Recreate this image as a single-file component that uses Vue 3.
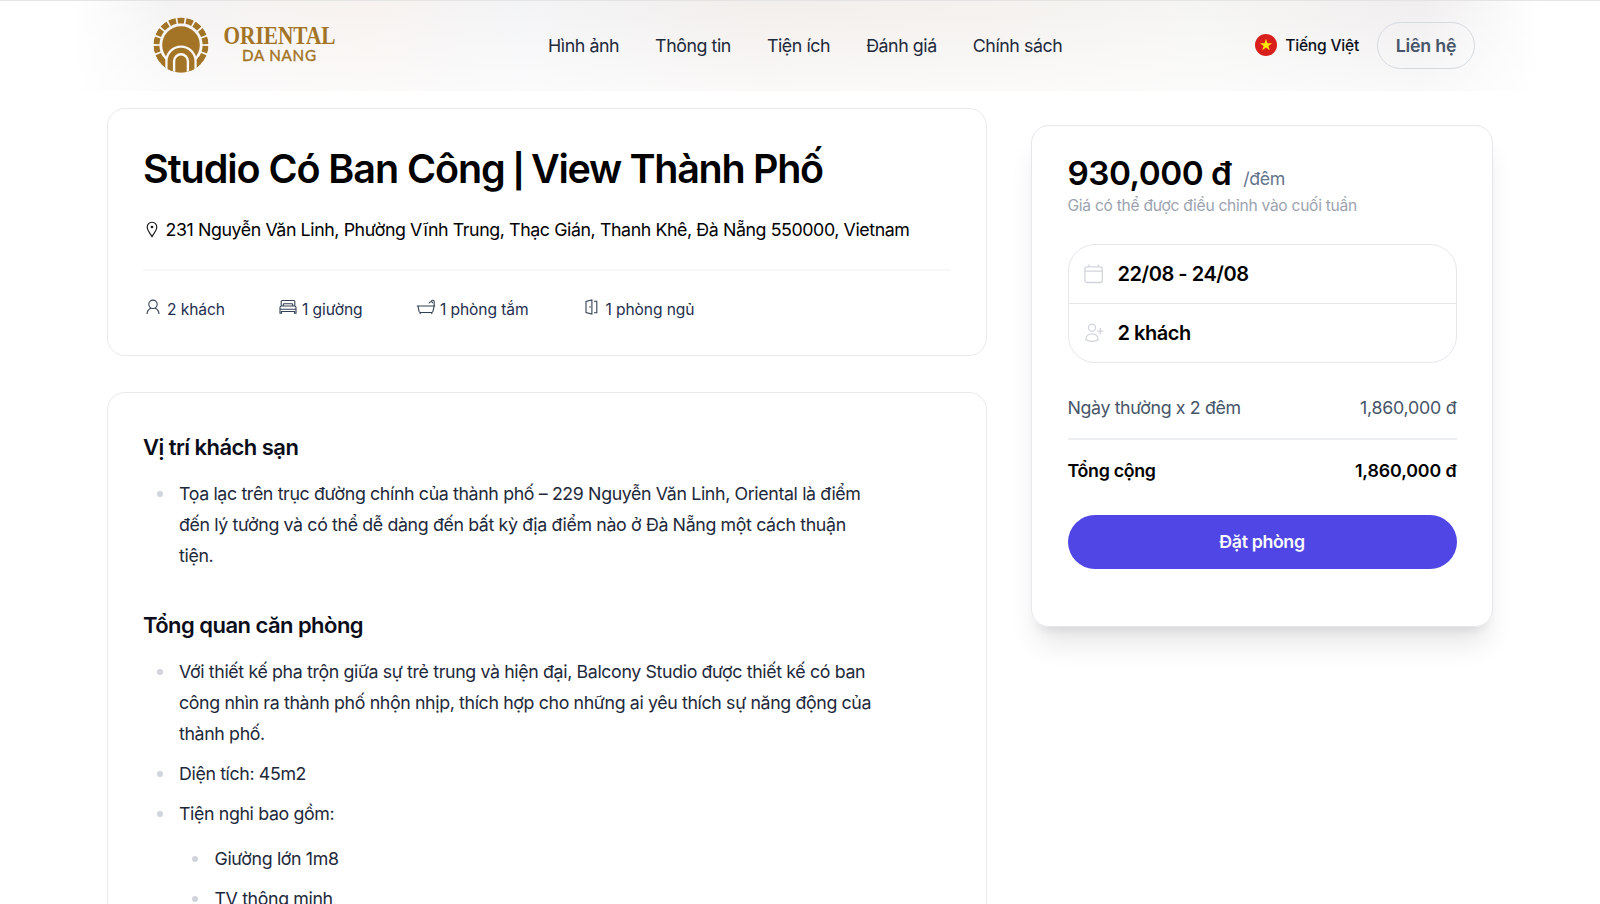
<template>
  <div class="page">
    <header class="header">
      <div class="header-inner">
        <a class="logo" href="#">
          <svg width="190" height="58" viewBox="0 0 190 58">
            <defs>
              <clipPath id="logo-clip">
                <circle cx="29" cy="29" r="27.6" />
              </clipPath>
            </defs>
            <g clip-path="url(#logo-clip)">
              <circle
                class="ring"
                cx="29"
                cy="29"
                r="24.6"
                pathLength="180"
                stroke-dasharray="8 2"
                stroke-dashoffset="-1"
              />
              <path class="ring" d="M8.4 42.2A24.4 24.4 0 0 0 49.6 42.2" />
              <circle class="gold" cx="29" cy="29" r="18.8" />
              <path class="gap" d="M13.3 58V45.2a15.7 15.7 0 0 1 31.4 0V58z" />
              <path class="gold" d="M15.6 58V45.2a13.4 13.4 0 0 1 26.8 0V58z" />
              <path class="gap" d="M20.9 58V45.2a8.1 8.1 0 0 1 16.2 0V58z" />
              <path class="gold" d="M23.3 58V45.2a5.7 5.7 0 0 1 11.4 0V58z" />
            </g>
            <text class="brand" x="71.5" y="27.5" textLength="112" lengthAdjust="spacingAndGlyphs">ORIENTAL</text>
            <text class="city" x="90" y="44.7" textLength="74">DA NANG</text>
          </svg>
        </a>

        <nav class="nav">
          <a v-for="item in navItems" :key="item" href="#">{{ item }}</a>
        </nav>

        <div class="header-right">
          <div class="lang">
            <svg width="22" height="22" viewBox="0 0 22 22">
              <circle cx="11" cy="11" r="11" fill="#d91f1b" />
              <path
                d="M11 4.8l1.45 4.4h4.65l-3.75 2.75 1.45 4.4L11 13.6l-3.8 2.75 1.45-4.4L4.9 9.2h4.65z"
                fill="#ffec00"
              />
            </svg>
            <span>Tiếng Việt</span>
          </div>
          <button class="contact-btn">Liên hệ</button>
        </div>
      </div>
    </header>

    <main class="main">
      <div class="content">
        <section class="card summary">
          <h1><span class="room-type">Studio Có Ban Công</span> <span class="bar">|</span> View Thành Phố</h1>
          <div class="address">
            <svg width="12" height="17" viewBox="0 0 12 17">
              <path d="M6 15.6C4.2 12.6 1.2 9.2 1.2 6a4.8 4.8 0 0 1 9.6 0c0 3.2-3 6.6-4.8 9.6z" />
              <circle cx="6" cy="6" r="0.8" />
            </svg>
            <span>231 Nguyễn Văn Linh, Phường Vĩnh Trung, Thạc Gián, Thanh Khê, Đà Nẵng 550000, Vietnam</span>
          </div>
          <hr />
          <ul class="stats">
            <li class="stat-guest">
              <svg width="14" height="16" viewBox="0 0 14 16">
                <circle cx="7" cy="5.3" r="4.2" />
                <path d="M1 15c.2-3 2.2-5 4-5.7M13 15c-.2-3-2.2-5-4-5.7" />
              </svg>
              <span>2 khách</span>
            </li>
            <li class="stat-bed">
              <svg width="18" height="16" viewBox="0 0 18 16">
                <path d="M2.2 7V2.5q0-1 1-1h11.600q1 0 1 1V7M1 14.200V8.500Q1 7 2.500 7h13Q17 7 17 8.500v5.700h-1.500v-1.700h-13v1.700zM1 10.300h16M4.300 7V5.500q0-.8.8-.8h7.800q.8 0 .8.800V7" />
              </svg>
              <span>1 giường</span>
            </li>
            <li class="stat-bath">
              <svg width="20" height="16" viewBox="0 0 20 16">
                <path d="M.8 7h18.400M2 7l1 5.200q.3 1.300 1.500 1.300h11q1.200 0 1.500-1.300L18.200 7V2.800q0-1.600-1.500-1.600-1.300 0-1.500 1.500M13 4.300q.3-1.600 2.200-1.600 1.500 0 1.500 1.600M4.500 13.500l-.5 1.500M15.500 13.500l.5 1.500" />
              </svg>
              <span>1 phòng tắm</span>
            </li>
            <li class="stat-room">
              <svg width="13" height="16" viewBox="0 0 13 16">
                <path d="M6.900 1v14L1 13.600V2.400zM9 2.200h2.800v11.600H9M5 7.300v1.400" />
              </svg>
              <span>1 phòng ngủ</span>
            </li>
          </ul>
        </section>

        <section class="card prose">
          <h2>Vị trí khách sạn</h2>
          <ul>
            <li>
              Tọa lạc trên trục đường chính của thành phố – 229 Nguyễn Văn Linh, Oriental là điểm
              đến lý tưởng và có thể dễ dàng đến bất kỳ địa điểm nào ở Đà Nẵng một cách thuận tiện.
            </li>
          </ul>
          <h2>Tổng quan căn phòng</h2>
          <ul>
            <li>
              Với thiết kế pha trộn giữa sự trẻ trung và hiện đại, Balcony Studio được thiết kế có ban
              công nhìn ra thành phố nhộn nhịp, thích hợp cho những ai yêu thích sự năng động của
              thành phố.
            </li>
            <li>Diện tích: 45m2</li>
            <li>
              Tiện nghi bao gồm:
              <ul>
                <li v-for="item in amenities" :key="item">{{ item }}</li>
              </ul>
            </li>
          </ul>
        </section>
      </div>

      <aside class="booking">
        <div class="price">
          <strong>930,000 đ</strong>
          <span>/đêm</span>
        </div>
        <p class="note">Giá có thể được điều chỉnh vào cuối tuần</p>

        <div class="picker">
          <div class="picker-row">
            <svg width="20" height="20" viewBox="0 0 20 20">
              <rect x="0.9" y="2.8" width="17.4" height="15.7" rx="2" />
              <path d="M.9 7.2h17.400M4.900 2.800V.6M14.300 2.800V.6" />
            </svg>
            <span>22/08 - 24/08</span>
          </div>
          <div class="picker-row">
            <svg width="20" height="20" viewBox="0 0 20 20">
              <circle cx="8" cy="4.7" r="3.5" />
              <path d="M1.8 16.800c0-3.400 2.500-5.900 6.200-5.900s6.200 2.500 6.200 5.900c-2.800 2-9.600 2-12.400 0zM16.300 5v6.400M13.100 8.200h6.200" />
            </svg>
            <span>2 khách</span>
          </div>
        </div>

        <div class="line">
          <span class="line-label">Ngày thường x 2 đêm</span>
          <span class="line-value">1,860,000 đ</span>
        </div>
        <hr />
        <div class="line total">
          <span class="line-label">Tổng cộng</span>
          <span class="line-value">1,860,000 đ</span>
        </div>

        <button class="book-btn">Đặt phòng</button>
      </aside>
    </main>
  </div>
</template>

<script setup>
import { ref } from 'vue'

const navItems = ref(['Hình ảnh', 'Thông tin', 'Tiện ích', 'Đánh giá', 'Chính sách'])

const amenities = ref(['Giường lớn 1m8', 'TV thông minh'])
</script>

<style>
body {
  margin: 0;
  overflow: hidden;
  background: #fff;
}
</style>

<style scoped>
.page {
  height: 904px;
  overflow: hidden;
  font-family: Inter, 'Noto Sans', sans-serif;
  font-size: 17.8px;
  letter-spacing: -0.37px;
  color: #000;
}

a {
  color: inherit;
  text-decoration: none;
}

ul {
  margin: 0;
  padding: 0;
  list-style: none;
}

button {
  font: inherit;
  letter-spacing: inherit;
  cursor: pointer;
}

/* header */
.header {
  box-sizing: border-box;
  height: 91px;
  border-top: 1px solid #e4e4e4;
  background:
    linear-gradient(to bottom, rgba(255, 255, 255, 0), rgba(255, 255, 255, 0.65)),
    linear-gradient(
      to right,
      #fff 70px,
      #f4f3f3 170px,
      #f7f2ef 370px,
      #f3f4f6 520px,
      #f2eeeb 760px,
      #f4f1ee 1000px,
      #f5f5f3 1200px,
      #f0eeee 1420px,
      #fff 1540px
    );
}

.header-inner {
  display: grid;
  grid-template-columns: 396px 1fr auto;
  align-items: center;
  height: 88px;
  padding: 0 125px 0 152px;
}

.logo {
  height: 58px;
  margin-top: -1px;
}

.logo svg {
  display: block;
}

.ring {
  fill: none;
  stroke: #a37425;
  stroke-width: 6;
}

.gold {
  fill: #a37425;
}

.gap {
  fill: #f8f7f6;
}

.brand {
  font-family: 'Liberation Serif', serif;
  font-size: 25px;
  font-weight: 700;
  letter-spacing: 0;
  fill: #a37425;
}

.city {
  font-family: Lato, sans-serif;
  font-size: 15.2px;
  font-weight: 400;
  letter-spacing: 0;
  fill: #a37425;
  stroke: #a37425;
  stroke-width: 0.4;
}

.nav {
  display: flex;
  gap: 36px;
  letter-spacing: -0.43px;
  color: #1e293b;
}

.header-right {
  display: flex;
  align-items: center;
  gap: 18px;
}

.lang {
  display: flex;
  align-items: center;
  gap: 8.5px;
  font-size: 15.6px;
  font-weight: 500;
  color: #0b1020;
  letter-spacing: -0.22px;
}

.contact-btn {
  box-sizing: border-box;
  width: 98px;
  height: 47px;
  padding: 0;
  border: 1px solid #d5dae1;
  border-radius: 24px;
  background: transparent;
  color: #475569;
  font-weight: 600;
  letter-spacing: -0.22px;
}

/* layout */
.main {
  display: flex;
  align-items: flex-start;
  gap: 44px;
  padding: 17px 107px 0;
}

.content {
  display: flex;
  flex-direction: column;
  gap: 36px;
  width: 880px;
}

.card {
  box-sizing: border-box;
  border: 1px solid #e8eaed;
  border-radius: 18px;
  padding: 36px 35px;
}

hr {
  margin: 0;
  border: 0;
}

/* summary */
.summary {
  height: 248px;
}

.summary h1 {
  height: 47px;
  margin: 0;
  font-size: 39.5px;
  font-weight: 600;
  line-height: 48px;
  letter-spacing: -1.29px;
  white-space: nowrap;
}

.room-type {
  letter-spacing: -1.06px;
}

.bar {
  margin: 0 -1px;
  font-size: 33px;
  font-weight: 700;
  line-height: 1;
}

.address {
  display: flex;
  align-items: center;
  gap: 8px;
  height: 28px;
  margin-top: 23.5px;
  padding-left: 2.5px;
  letter-spacing: -0.41px;
}

.address svg {
  fill: none;
  stroke: #111;
  stroke-width: 1.1;
}

.summary hr {
  height: 2px;
  margin-top: 25px;
  background: #f8f8fa;
}

.stats {
  display: flex;
  align-items: center;
  height: 26px;
  margin-top: 25.5px;
  padding-left: 3px;
  font-size: 15.6px;
  letter-spacing: -0.1px;
  color: #1e2f4d;
}

.stats li {
  display: flex;
  align-items: center;
}

.stats svg {
  margin-top: -5px;
  fill: none;
  stroke: #334155;
  stroke-width: 1.1;
}

.stat-guest {
  gap: 7px;
  width: 133px;
}

.stat-bed {
  gap: 5px;
  width: 137px;
}

.stat-bath {
  gap: 4px;
  width: 168.5px;
}

.stat-room {
  gap: 8px;
}

/* description */
.prose {
  height: 560px;
  color: #1e293b;
}

.prose h2 {
  margin: 0;
  font-size: 22px;
  font-weight: 600;
  line-height: 36px;
  letter-spacing: -0.54px;
  color: #0b0d1a;
}

.prose ul + h2 {
  margin-top: 36px;
}

.prose > ul {
  width: 700px;
  margin-top: 12.5px;
  padding-left: 36px;
}

.prose h2 ~ h2 + ul {
  margin-top: 13.5px;
}

.prose li {
  position: relative;
  line-height: 31.1px;
}

.prose li + li {
  margin-top: 8.9px;
}

.prose li::before {
  content: '';
  position: absolute;
  left: -22.5px;
  top: 13px;
  width: 6px;
  height: 6px;
  border-radius: 50%;
  background: #d1d5db;
}

.prose li ul {
  margin-top: 13.3px;
  padding-left: 35.5px;
}

/* booking */
.booking {
  box-sizing: border-box;
  width: 462px;
  height: 502px;
  margin-top: 17px;
  padding: 25px 35.5px;
  border: 1px solid #e5e7eb;
  border-radius: 18px;
  box-shadow:
    0 22px 28px -6px rgba(0, 0, 0, 0.1),
    0 9px 11px -7px rgba(0, 0, 0, 0.1);
}

.price {
  display: flex;
  align-items: baseline;
  gap: 12px;
  height: 40px;
  line-height: 45px;
}

.price strong {
  font-size: 33.3px;
  font-weight: 600;
  letter-spacing: -0.5px;
}

.price span {
  color: #64748b;
}

.note {
  margin: 3px 0 0;
  font-size: 15.6px;
  line-height: 24px;
  letter-spacing: -0.28px;
  color: #9ca3af;
}

.picker {
  box-sizing: border-box;
  height: 119px;
  margin-top: 26px;
  border: 1px solid #e5e7eb;
  border-radius: 27px;
}

.picker-row {
  display: flex;
  align-items: center;
  gap: 14px;
  box-sizing: border-box;
  height: 58px;
  padding-left: 15px;
  font-size: 20px;
  font-weight: 600;
  letter-spacing: -0.45px;
}

.picker-row + .picker-row {
  height: 59px;
  border-top: 1px solid #e5e7eb;
}

.picker-row svg {
  fill: none;
  stroke: #d1d5db;
  stroke-width: 1.3;
}

.line {
  display: flex;
  justify-content: space-between;
  margin-top: 31px;
  line-height: 28px;
  color: #475569;
}

.line-value {
  letter-spacing: -0.22px;
}

.booking hr {
  height: 2px;
  margin-top: 16px;
  background: #eceef1;
}

.total {
  margin-top: 17px;
  font-weight: 600;
  color: #000;
  letter-spacing: -0.3px;
}

.total .line-value {
  letter-spacing: -0.1px;
}

.book-btn {
  width: 100%;
  height: 53.5px;
  margin-top: 30px;
  padding: 0;
  border: 0;
  border-radius: 27px;
  background: #4f46e5;
  color: #f9fafb;
  font-weight: 600;
}
</style>
